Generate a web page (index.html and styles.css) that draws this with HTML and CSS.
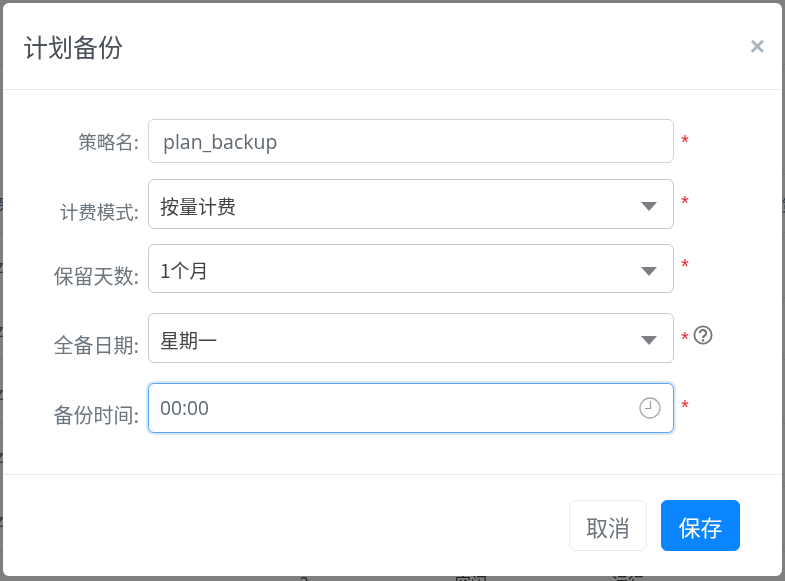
FILE: index.html
```html
<!DOCTYPE html>
<html lang="zh">
<head>
<meta charset="utf-8">
<title>计划备份</title>
<link rel="stylesheet" href="styles.css">
</head>
<body>
<div class="backdrop">
  <div class="bg-rows">
    <div class="bg-row bg-r1"></div>
    <div class="bg-row bg-r2"></div>
    <div class="bg-row bg-r3"><span>策</span><span>策</span></div>
    <div class="bg-row bg-r4"><span>z</span></div>
    <div class="bg-row bg-r5"><span>z</span></div>
    <div class="bg-row bg-r6"><span>z</span></div>
    <div class="bg-row bg-r7"><span>z</span></div>
    <div class="bg-row bg-r8"><span>z</span></div>
  </div>
  <div class="bg-peek"><span>2</span><span>空闲</span><span>运行</span></div>
  <section class="modal">
    <header class="modal-head">
      <h1 class="modal-title">计划备份</h1>
      <span class="modal-close">×</span>
    </header>
    <form class="modal-body">
      <div class="row row-name">
        <label class="lbl">策略名:</label>
        <div class="ctl"><span class="val val-name">plan_backup</span></div>
        <span class="req">*</span>
      </div>
      <div class="row row-mode">
        <label class="lbl">计费模式:</label>
        <div class="ctl ctl-select"><span class="val val-sel">按量计费</span><span class="caret"></span></div>
        <span class="req">*</span>
      </div>
      <div class="row row-days">
        <label class="lbl">保留天数:</label>
        <div class="ctl ctl-select"><span class="val val-sel">1个月</span><span class="caret"></span></div>
        <span class="req">*</span>
      </div>
      <div class="row row-date">
        <label class="lbl">全备日期:</label>
        <div class="ctl ctl-select"><span class="val val-sel">星期一</span><span class="caret"></span></div>
        <span class="req">*</span>
        <svg class="help" viewBox="0 0 20 20" width="20" height="20" aria-hidden="true">
          <circle cx="10" cy="10" r="8.6" fill="none" stroke="#777" stroke-width="1.9"/>
          <path d="M6.9 8a3.1 3.1 0 1 1 5 2.4c-1.1.8-1.9 1.2-1.9 2.6" fill="none" stroke="#777" stroke-width="2.2"/>
          <circle cx="10" cy="15.3" r="1.3" fill="#777"/>
        </svg>
      </div>
      <div class="row row-time">
        <label class="lbl">备份时间:</label>
        <div class="ctl ctl-focus"><span class="val val-time">00:00</span>
          <svg class="clock" viewBox="0 0 24 24" width="24" height="24" aria-hidden="true">
            <circle cx="12" cy="12" r="10" fill="none" stroke="#aaa" stroke-width="1.3"/>
            <path d="M12.5 5v7.5H7" fill="none" stroke="#999" stroke-width="1.1"/>
          </svg>
        </div>
        <span class="req">*</span>
      </div>
    </form>
    <footer class="modal-foot">
      <button class="btn btn-cancel" type="button">取消</button>
      <button class="btn btn-save" type="button">保存</button>
    </footer>
  </section>
</div>
</body>
</html>
```
FILE: styles.css
```css
* { box-sizing: border-box; }
html, body { margin: 0; padding: 0; }
body { width: 785px; height: 581px; overflow: hidden; font-family: "Noto Sans CJK SC", "Noto Sans", sans-serif; }
.backdrop { position: relative; width: 785px; height: 581px; background: #7f7f7f; overflow: hidden; padding: 3px 0 0 3px; filter: blur(0.45px); }
.bg-rows { position: absolute; left: 0; right: 0; top: 0; display: flex; flex-direction: column; }
.bg-row { border-bottom: 1px solid #737373; display: flex; align-items: center; justify-content: space-between; font-size: 18px; line-height: 20px; color: #2a3a4a; padding: 0 0; }
.bg-row span { margin-left: -5px; }
.bg-row span + span { margin-left: 0; margin-right: -15px; }
.bg-r1 { height: 65px; }
.bg-r2 { height: 110px; }
.bg-r3 { height: 58px; }
.bg-r4 { height: 65px; }
.bg-r5 { height: 62px; }
.bg-r6 { height: 64px; }
.bg-r7 { height: 63px; }
.bg-r8 { height: 65px; }
.bg-peek { position: absolute; left: 0; right: 0; top: 572px; height: 9px; font-size: 16px; line-height: 20px; color: #222; overflow: hidden; }
.bg-peek span { position: absolute; top: 0; }
.bg-peek span:nth-child(1) { left: 300px; }
.bg-peek span:nth-child(2) { left: 455px; }
.bg-peek span:nth-child(3) { left: 612px; }
.modal { position: relative; width: 779px; height: 573px; background: #fff; border-radius: 6px; display: flex; flex-direction: column; }
.modal-head { height: 87px; border-bottom: 1px solid #e9ecef; display: flex; align-items: center; justify-content: space-between; padding: 0 17px 0 20px; }
.modal-title { margin: 0; font-size: 25px; font-weight: 400; line-height: 30px; color: #495057; }
.modal-close { font-size: 26px; line-height: 26px; color: #aab4bd; font-weight: 700; font-family: "Liberation Sans", sans-serif; }
.modal-body { flex: 1; display: flex; flex-direction: column; padding: 29px 0 0; }
.row { display: flex; align-items: center; position: relative; }
.row-name { height: 44px; margin-bottom: 16px; }
.row-mode { height: 50px; margin-bottom: 15px; }
.row-days { height: 49px; margin-bottom: 20px; }
.row-date { height: 50px; margin-bottom: 20px; }
.row-time { height: 50px; }
.lbl { width: 136px; text-align: right; font-size: 20px; line-height: 24px; color: #6c757d; flex: none; margin-right: 9px; position: relative; }
.row-name .lbl { top: 0; font-size: 18.5px; }
.row-mode .lbl { top: 7px; font-size: 18.5px; }
.row-days .lbl { top: 7px; }
.row-date .lbl { top: 7px; }
.row-time .lbl { top: 7px; }
.ctl { width: 526px; height: 100%; flex: none; border: 1px solid #ced4da; border-radius: 6px; display: flex; align-items: center; position: relative; background: #fff; }
.ctl-select { border-color: #c9c9c9; }
.ctl-focus { border-color: #5aa5f5; box-shadow: 0 0 0 2px #d6e8fd; }
.val { font-size: 20px; line-height: 28px; color: #5f6770; }
.val-name { padding-left: 14px; font-family: "Open Sans", "Noto Sans CJK SC", sans-serif; font-size: 19.5px; position: relative; top: 1px; }
.val-sel { padding-left: 11px; font-size: 19px; color: #444; position: relative; }
.row-mode .val-sel { top: 2px; }
.row-days .val-sel { top: 1px; }
.row-date .val-sel { top: 2px; }
.val-time { padding-left: 11px; font-family: "Open Sans", sans-serif; font-size: 19.2px; position: relative; }
.caret { position: absolute; right: 16px; top: 50%; margin-top: -2px; width: 0; height: 0; border-left: 8px solid transparent; border-right: 8px solid transparent; border-top: 9px solid #7d7f85; }
.clock { position: absolute; right: 11px; top: 50%; margin-top: -12px; }
.req { color: #f5222d; font-size: 20px; line-height: 18px; margin-left: 7px; position: relative; top: 1px; font-family: "Liberation Sans", sans-serif; }
.row-mode .req { top: -1px; }
.row-days .req { top: -3px; }
.row-time .req { top: -1px; }
.help { position: relative; top: -3px; margin-left: 4px; flex: none; }
.modal-foot { height: 102px; border-top: 1px solid #e9ecef; display: flex; align-items: flex-start; justify-content: flex-end; gap: 14px; padding: 25px 42px 0 0; }
.btn { height: 51px; border-radius: 6px; font-family: inherit; font-size: 22px; line-height: 28px; padding: 0; cursor: pointer; }
.btn-cancel { width: 78px; background: #fff; border: 1px solid #e9ecef; color: #6c757d; }
.btn-save { width: 79px; background: #0a84ff; border: 1px solid #0a84ff; color: #fff; }
```
